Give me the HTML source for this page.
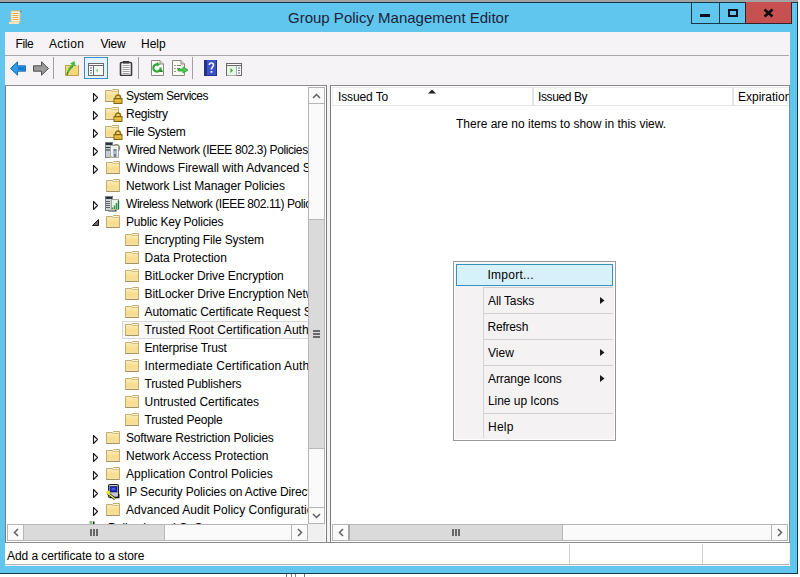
<!DOCTYPE html>
<html><head><meta charset="utf-8"><style>
html,body{margin:0;padding:0;width:800px;height:577px;overflow:hidden;background:#fff;font-family:"Liberation Sans", sans-serif;font-size:12px;color:#000}
div{box-sizing:border-box}
.a{position:absolute;white-space:nowrap}
.t{position:absolute;white-space:nowrap;line-height:18px;height:18px}
</style></head><body>
<div class="a" style="left:0;top:0;width:800px;height:2px;background:#a4a2a3"></div>
<div class="a" style="left:0;top:2px;width:798px;height:572px;background:#60c6ee;border-top:1px solid #163846;border-right:1px solid #163846;border-bottom:1px solid #163846"></div>
<!-- white strip right -->
<!-- app icon -->
<svg class="a" style="left:8px;top:9px" width="16" height="16" viewBox="0 0 16 16"><path d="M3,2 H12 V13 H3Z" fill="#fbf3dc" stroke="#d8c089"/><path d="M4.5,4.5 H10.5 M4.5,6.5 H10.5 M4.5,8.5 H10.5 M4.5,10.5 H10.5" stroke="#e0a850" stroke-width="1"/><path d="M1,14 H11" stroke="#f6e6b8" stroke-width="2"/><circle cx="13" cy="2.5" r="1" fill="#7090a0"/></svg>
<div class="a" style="left:0;top:8px;width:797px;text-align:center;font-size:15px;line-height:20px;color:#1e2238;padding-left:0">Group Policy Management Editor</div>
<!-- caption buttons -->
<div class="a" style="left:691px;top:2px;width:101px;height:22px;border:1px solid #163846;border-top:none"></div>
<div class="a" style="left:719px;top:2px;width:1px;height:22px;background:#163846"></div>
<div class="a" style="left:745px;top:2px;width:47px;height:22px;background:#c75050;border:1px solid #3a1f25;border-top:none"></div>
<div class="a" style="left:700px;top:14px;width:10px;height:3px;background:#0d0f1e"></div>
<div class="a" style="left:728px;top:9px;width:10px;height:8px;border:2px solid #0d0f1e"></div>
<svg class="a" style="left:763px;top:8px" width="11" height="10" viewBox="0 0 11 10"><path d="M1.5,1.5 L9.5,8.5 M9.5,1.5 L1.5,8.5" stroke="#0d0d0d" stroke-width="2.6"/></svg>

<!-- client area -->
<div class="a" style="left:5px;top:32px;width:785px;height:534px;background:#f6f3f6"></div>
<!-- menu -->
<div class="a" style="left:15.5px;top:35px;line-height:18px;letter-spacing:-0.4px">File</div>
<div class="a" style="left:49px;top:35px;line-height:18px;letter-spacing:0.3px">Action</div>
<div class="a" style="left:100.5px;top:35px;line-height:18px;letter-spacing:-0.25px">View</div>
<div class="a" style="left:141px;top:35px;line-height:18px">Help</div>
<div class="a" style="left:5px;top:55px;width:784px;height:1px;background:#a8a8a8"></div>
<!-- toolbar -->
<svg class="a" style="left:9px;top:60px" width="18" height="17" viewBox="0 0 18 17"><path d="M1.5,8.5 L8.5,1.8 V5.8 H16.5 V11.2 H8.5 V15.2 Z" fill="#2d9be6" stroke="#1d6fb8" stroke-width="1" stroke-linejoin="round"/><path d="M9,7 H15.5 V10 H9Z" fill="#0d62c0" opacity="0.6"/></svg>
<svg class="a" style="left:32px;top:60px" width="18" height="17" viewBox="0 0 18 17"><path d="M16.5,8.5 L9.5,1.8 V5.8 H1.5 V11.2 H9.5 V15.2 Z" fill="#9a9a9a" stroke="#505050" stroke-width="1" stroke-linejoin="round"/></svg>
<div class="a" style="left:53px;top:57px;width:1px;height:22px;background:#a0a0a0"></div>
<svg class="a" style="left:64px;top:60px" width="16" height="17" viewBox="0 0 16 17"><path d="M1.5,5.5 H14.5 V15.5 H1.5Z" fill="#f6d77c" stroke="#c0a050"/><path d="M3,15 C4,10 6,8 9,6" stroke="#3a8a2a" stroke-width="1.6" fill="none"/><path d="M6,3.5 L10.5,1 L11.5,6.5 Z" fill="#3cc43c"/><path d="M4,12 C5,8 7,6 9.5,4.5" stroke="#40c040" stroke-width="1.8" fill="none"/><circle cx="13" cy="5" r="1" fill="#fff"/></svg>
<div class="a" style="left:84px;top:57px;width:24px;height:22px;background:#e3f2fb;border:1px solid #3a8fc4"></div>
<svg class="a" style="left:88px;top:63px" width="16" height="13" viewBox="0 0 16 13"><rect x="0.5" y="0.5" width="15" height="12" fill="#fafafa" stroke="#6a6a6a"/><path d="M0.5,2.5 H15.5" stroke="#6a6a6a"/><path d="M5.5,3 V12.5" stroke="#6a6a6a"/><path d="M2,5 H4 M2,7.5 H4 M2,10 H4" stroke="#5070a0" stroke-width="1"/><path d="M10,5.5 L7.5,7.5 L10,9.5Z" fill="#3aa040"/><rect x="6" y="3" width="9" height="9" fill="#eef8e8" opacity="0.5"/></svg>
<svg class="a" style="left:119px;top:60px" width="14" height="16" viewBox="0 0 14 16"><rect x="1.5" y="2.5" width="11" height="13" rx="1" fill="#f8f8f8" stroke="#3a3a3a" stroke-width="1.6"/><path d="M3.5,5.5 H10.5 M3.5,7.5 H10.5 M3.5,9.5 H10.5 M3.5,11.5 H10.5 M3.5,13.5 H10.5" stroke="#8a8a8a" stroke-width="0.8"/><rect x="4" y="1" width="6" height="2.5" fill="#3a3a3a"/></svg>
<div class="a" style="left:138px;top:57px;width:1px;height:22px;background:#a0a0a0"></div>
<svg class="a" style="left:150px;top:59px" width="15" height="17" viewBox="0 0 15 17"><path d="M1.5,1.5 H10 L13.5,5 V16.5 H1.5Z" fill="#fbfbf6" stroke="#8a8a80"/><path d="M10,1.5 V5 H13.5" fill="#e0e0e0" stroke="#8a8a80"/><path d="M10.5,8.5 A3.6,3.6 0 1 1 7.5,5.4" fill="none" stroke="#2fa83a" stroke-width="2.2"/><path d="M7,3 L10.2,5.6 L6.8,7.6Z" fill="#2fa83a"/><path d="M11.5,10 L9,13 L13,13Z" fill="#1f8a2a"/></svg>
<svg class="a" style="left:171px;top:59px" width="18" height="17" viewBox="0 0 18 17"><path d="M1.5,1.5 H10 L13.5,5 V16.5 H1.5Z" fill="#fbfbf6" stroke="#8a8a80"/><path d="M10,1.5 V5 H13.5" fill="#e0e0e0" stroke="#8a8a80"/><path d="M3.5,6.5 H4.5 M3.5,9.5 H4.5 M3.5,12.5 H4.5" stroke="#303030" stroke-width="1.2"/><path d="M6,6.5 H10 M6,9.5 H9" stroke="#808080" stroke-width="1"/><path d="M7,10 H12 V8 L17,11 L12,14 V12 H7Z" fill="#4ad04a" stroke="#2a9a2a" stroke-width="0.8"/></svg>
<div class="a" style="left:192px;top:57px;width:1px;height:22px;background:#a0a0a0"></div>
<svg class="a" style="left:204px;top:60px" width="13" height="16" viewBox="0 0 13 16"><rect x="0" y="0" width="13" height="16" fill="#3c52c4"/><rect x="0" y="0" width="3" height="16" fill="#23338a"/><rect x="12" y="0" width="1" height="16" fill="#24308a"/><rect x="0" y="15" width="13" height="1" fill="#24308a"/><path d="M5.3,5 C5.3,2.4 9.5,2.4 9.5,5 C9.5,7 7.4,7 7.4,9.5" fill="none" stroke="#f0f4ff" stroke-width="1.6"/><rect x="6.6" y="11" width="1.8" height="1.8" fill="#f0f4ff"/></svg>
<svg class="a" style="left:226px;top:63px" width="16" height="13" viewBox="0 0 16 13"><rect x="0.5" y="0.5" width="15" height="12" fill="#fafafa" stroke="#6a6a6a"/><path d="M0.5,2.5 H15.5" stroke="#6a6a6a"/><path d="M10.5,3 V12.5" stroke="#6a6a6a"/><rect x="1" y="3" width="9.5" height="9.5" fill="#eaf6e4"/><path d="M12,5 H14 M12,7.5 H14 M12,10 H14" stroke="#5070a0" stroke-width="1"/><path d="M4.5,5 L7,7.5 L4.5,10Z" fill="#3aa040"/></svg>

<div class="a" style="left:5px;top:85px;width:322px;height:1px;background:#8a8a8a"></div>
<div class="a" style="left:330px;top:85px;width:460px;height:1px;background:#8a8a8a"></div>

<!-- tree pane -->
<div class="a" style="left:5px;top:86px;width:322px;height:457px;background:#fff;border-left:1px solid #7a7a7a;border-right:1px solid #7a7a7a"></div>
<div class="a" style="left:6px;top:87px;width:302px;height:437px;overflow:hidden">
<div class="a" style="left:-6px;top:-87px;width:800px;height:600px">
<svg width="8" height="12" viewBox="0 0 8 12" style="position:absolute;left:92px;top:92px"><path d="M1.5,1.5 V9.5 L5.5,5.5 Z" fill="none" stroke="#1a1a1a" stroke-width="1.1" stroke-linejoin="round"/></svg>
<svg width="16" height="16" viewBox="0 0 16 16" style="position:absolute;left:104px;top:87px"><defs><linearGradient id="fg" x1="0" y1="0" x2="0" y2="1"><stop offset="0" stop-color="#fcf0c4"/><stop offset="0.6" stop-color="#f8dc8c"/><stop offset="1" stop-color="#f4e2a8"/></linearGradient></defs><path d="M1.5,3.5 H7.5 L8.5,2.5 H14.5 V14.5 H1.5 Z" fill="url(#fg)" stroke="#c2ad72"/><path d="M8.5,3 H14 V4.5 H8.5Z" fill="#fff6d8"/><path d="M7.5,4.5 H14" stroke="#d8c080" stroke-width="1"/><path d="M1.5,14.5 H14.5" stroke="#a89060"/></svg><svg width="10" height="10" viewBox="0 0 10 10" style="position:absolute;left:113px;top:94px"><path d="M2.5,5 V3.5 A2.5,2.5 0 0 1 7.5,3.5 V5" fill="#f0d070" stroke="#8a7010" stroke-width="1.4"/><rect x="1" y="4.5" width="8" height="5" fill="#d4a82a" stroke="#806510" stroke-width="1"/><path d="M1.5,6.5 H8.5 M1.5,8 H8.5" stroke="#f0c850" stroke-width="0.8"/></svg>
<div class="t" style="left:126px;top:87px;letter-spacing:-0.486px">System Services</div>
<svg width="8" height="12" viewBox="0 0 8 12" style="position:absolute;left:92px;top:110px"><path d="M1.5,1.5 V9.5 L5.5,5.5 Z" fill="none" stroke="#1a1a1a" stroke-width="1.1" stroke-linejoin="round"/></svg>
<svg width="16" height="16" viewBox="0 0 16 16" style="position:absolute;left:104px;top:105px"><defs><linearGradient id="fg" x1="0" y1="0" x2="0" y2="1"><stop offset="0" stop-color="#fcf0c4"/><stop offset="0.6" stop-color="#f8dc8c"/><stop offset="1" stop-color="#f4e2a8"/></linearGradient></defs><path d="M1.5,3.5 H7.5 L8.5,2.5 H14.5 V14.5 H1.5 Z" fill="url(#fg)" stroke="#c2ad72"/><path d="M8.5,3 H14 V4.5 H8.5Z" fill="#fff6d8"/><path d="M7.5,4.5 H14" stroke="#d8c080" stroke-width="1"/><path d="M1.5,14.5 H14.5" stroke="#a89060"/></svg><svg width="10" height="10" viewBox="0 0 10 10" style="position:absolute;left:113px;top:112px"><path d="M2.5,5 V3.5 A2.5,2.5 0 0 1 7.5,3.5 V5" fill="#f0d070" stroke="#8a7010" stroke-width="1.4"/><rect x="1" y="4.5" width="8" height="5" fill="#d4a82a" stroke="#806510" stroke-width="1"/><path d="M1.5,6.5 H8.5 M1.5,8 H8.5" stroke="#f0c850" stroke-width="0.8"/></svg>
<div class="t" style="left:126px;top:105px;letter-spacing:-0.286px">Registry</div>
<svg width="8" height="12" viewBox="0 0 8 12" style="position:absolute;left:92px;top:128px"><path d="M1.5,1.5 V9.5 L5.5,5.5 Z" fill="none" stroke="#1a1a1a" stroke-width="1.1" stroke-linejoin="round"/></svg>
<svg width="16" height="16" viewBox="0 0 16 16" style="position:absolute;left:104px;top:123px"><defs><linearGradient id="fg" x1="0" y1="0" x2="0" y2="1"><stop offset="0" stop-color="#fcf0c4"/><stop offset="0.6" stop-color="#f8dc8c"/><stop offset="1" stop-color="#f4e2a8"/></linearGradient></defs><path d="M1.5,3.5 H7.5 L8.5,2.5 H14.5 V14.5 H1.5 Z" fill="url(#fg)" stroke="#c2ad72"/><path d="M8.5,3 H14 V4.5 H8.5Z" fill="#fff6d8"/><path d="M7.5,4.5 H14" stroke="#d8c080" stroke-width="1"/><path d="M1.5,14.5 H14.5" stroke="#a89060"/></svg><svg width="10" height="10" viewBox="0 0 10 10" style="position:absolute;left:113px;top:130px"><path d="M2.5,5 V3.5 A2.5,2.5 0 0 1 7.5,3.5 V5" fill="#f0d070" stroke="#8a7010" stroke-width="1.4"/><rect x="1" y="4.5" width="8" height="5" fill="#d4a82a" stroke="#806510" stroke-width="1"/><path d="M1.5,6.5 H8.5 M1.5,8 H8.5" stroke="#f0c850" stroke-width="0.8"/></svg>
<div class="t" style="left:126px;top:123px;letter-spacing:-0.3px">File System</div>
<svg width="8" height="12" viewBox="0 0 8 12" style="position:absolute;left:92px;top:146px"><path d="M1.5,1.5 V9.5 L5.5,5.5 Z" fill="none" stroke="#1a1a1a" stroke-width="1.1" stroke-linejoin="round"/></svg>
<svg width="17" height="17" viewBox="0 0 17 17" style="position:absolute;left:104px;top:141px"><rect x="1.5" y="1.5" width="7" height="15" fill="#c4ccd6" stroke="#6f7d8c"/><rect x="2" y="2" width="6" height="2" fill="#2a3038"/><path d="M2,6.5 H6 M2,9 H6" stroke="#2a3038" stroke-width="1.2"/><rect x="6.5" y="4.5" width="8" height="12" fill="#f4f2ec" stroke="#b0ac9c"/><rect x="9.5" y="8" width="3" height="8" fill="#6f82a0"/><path d="M11,10 V13" stroke="#e8eef8" stroke-width="1"/><path d="M9,4.5 C12,3 15,3 15.5,6 C16,8 15,9 14.5,10" fill="none" stroke="#8f8872" stroke-width="1.1"/><rect x="5" y="15" width="3" height="1.5" fill="#d0b890"/></svg>
<div class="t" style="left:126px;top:141px;letter-spacing:-0.39px">Wired Network (IEEE 802.3) Policies</div>
<svg width="8" height="12" viewBox="0 0 8 12" style="position:absolute;left:92px;top:164px"><path d="M1.5,1.5 V9.5 L5.5,5.5 Z" fill="none" stroke="#1a1a1a" stroke-width="1.1" stroke-linejoin="round"/></svg>
<svg width="16" height="16" viewBox="0 0 16 16" style="position:absolute;left:105px;top:159px"><defs><linearGradient id="fg" x1="0" y1="0" x2="0" y2="1"><stop offset="0" stop-color="#fcf0c4"/><stop offset="0.6" stop-color="#f8dc8c"/><stop offset="1" stop-color="#f4e2a8"/></linearGradient></defs><path d="M1.5,3.5 H7.5 L8.5,2.5 H14.5 V14.5 H1.5 Z" fill="url(#fg)" stroke="#c2ad72"/><path d="M8.5,3 H14 V4.5 H8.5Z" fill="#fff6d8"/><path d="M7.5,4.5 H14" stroke="#d8c080" stroke-width="1"/><path d="M1.5,14.5 H14.5" stroke="#a89060"/></svg>
<div class="t" style="left:126px;top:159px;letter-spacing:-0.021px">Windows Firewall with Advanced Security</div>
<svg width="16" height="16" viewBox="0 0 16 16" style="position:absolute;left:105px;top:177px"><defs><linearGradient id="fg" x1="0" y1="0" x2="0" y2="1"><stop offset="0" stop-color="#fcf0c4"/><stop offset="0.6" stop-color="#f8dc8c"/><stop offset="1" stop-color="#f4e2a8"/></linearGradient></defs><path d="M1.5,3.5 H7.5 L8.5,2.5 H14.5 V14.5 H1.5 Z" fill="url(#fg)" stroke="#c2ad72"/><path d="M8.5,3 H14 V4.5 H8.5Z" fill="#fff6d8"/><path d="M7.5,4.5 H14" stroke="#d8c080" stroke-width="1"/><path d="M1.5,14.5 H14.5" stroke="#a89060"/></svg>
<div class="t" style="left:126px;top:177px;letter-spacing:-0.089px">Network List Manager Policies</div>
<svg width="8" height="12" viewBox="0 0 8 12" style="position:absolute;left:92px;top:200px"><path d="M1.5,1.5 V9.5 L5.5,5.5 Z" fill="none" stroke="#1a1a1a" stroke-width="1.1" stroke-linejoin="round"/></svg>
<svg width="17" height="17" viewBox="0 0 17 17" style="position:absolute;left:104px;top:195px"><rect x="1.5" y="1.5" width="7" height="14" fill="#d0d4d8" stroke="#7a8088"/><rect x="2" y="2" width="6" height="2" fill="#2a3038"/><path d="M2,6.5 H6 M2,8.5 H6 M2,10.5 H6 M2,12.5 H6" stroke="#50565c" stroke-width="0.9"/><rect x="7.5" y="4.5" width="7" height="10" fill="#e8f4e8" stroke="#a0a890"/><path d="M8.5,14 V12.5 M10.5,14 V10.5 M12.5,14 V8 M14.5,14 V5.5" stroke="#1f7a3a" stroke-width="1.4"/><path d="M9,14 V12.5 M11,14 V10.5 M13,14 V8" stroke="#7ad890" stroke-width="0.6"/><rect x="4.5" y="15" width="8" height="1.5" fill="#3a3a3a"/><rect x="5" y="14.5" width="6" height="1" fill="#dfe8c0"/></svg>
<div class="t" style="left:126px;top:195px;letter-spacing:-0.434px">Wireless Network (IEEE 802.11) Policies</div>
<svg width="8" height="8" viewBox="0 0 8 8" style="position:absolute;left:92px;top:219px"><path d="M6.5,0.5 V6.5 H0.5 Z" fill="#6a6a6a" stroke="#1a1a1a" stroke-width="1" stroke-linejoin="round"/></svg>
<svg width="16" height="16" viewBox="0 0 16 16" style="position:absolute;left:105px;top:213px"><defs><linearGradient id="fg" x1="0" y1="0" x2="0" y2="1"><stop offset="0" stop-color="#fcf0c4"/><stop offset="0.6" stop-color="#f8dc8c"/><stop offset="1" stop-color="#f4e2a8"/></linearGradient></defs><path d="M1.5,3.5 H7.5 L8.5,2.5 H14.5 V14.5 H1.5 Z" fill="url(#fg)" stroke="#c2ad72"/><path d="M8.5,3 H14 V4.5 H8.5Z" fill="#fff6d8"/><path d="M7.5,4.5 H14" stroke="#d8c080" stroke-width="1"/><path d="M1.5,14.5 H14.5" stroke="#a89060"/></svg>
<div class="t" style="left:126px;top:213px;letter-spacing:-0.222px">Public Key Policies</div>
<svg width="16" height="16" viewBox="0 0 16 16" style="position:absolute;left:124px;top:231px"><defs><linearGradient id="fg" x1="0" y1="0" x2="0" y2="1"><stop offset="0" stop-color="#fcf0c4"/><stop offset="0.6" stop-color="#f8dc8c"/><stop offset="1" stop-color="#f4e2a8"/></linearGradient></defs><path d="M1.5,3.5 H7.5 L8.5,2.5 H14.5 V14.5 H1.5 Z" fill="url(#fg)" stroke="#c2ad72"/><path d="M8.5,3 H14 V4.5 H8.5Z" fill="#fff6d8"/><path d="M7.5,4.5 H14" stroke="#d8c080" stroke-width="1"/><path d="M1.5,14.5 H14.5" stroke="#a89060"/></svg>
<div class="t" style="left:144.5px;top:231px;letter-spacing:-0.152px">Encrypting File System</div>
<svg width="16" height="16" viewBox="0 0 16 16" style="position:absolute;left:124px;top:249px"><defs><linearGradient id="fg" x1="0" y1="0" x2="0" y2="1"><stop offset="0" stop-color="#fcf0c4"/><stop offset="0.6" stop-color="#f8dc8c"/><stop offset="1" stop-color="#f4e2a8"/></linearGradient></defs><path d="M1.5,3.5 H7.5 L8.5,2.5 H14.5 V14.5 H1.5 Z" fill="url(#fg)" stroke="#c2ad72"/><path d="M8.5,3 H14 V4.5 H8.5Z" fill="#fff6d8"/><path d="M7.5,4.5 H14" stroke="#d8c080" stroke-width="1"/><path d="M1.5,14.5 H14.5" stroke="#a89060"/></svg>
<div class="t" style="left:144.5px;top:249px;letter-spacing:-0.021px">Data Protection</div>
<svg width="16" height="16" viewBox="0 0 16 16" style="position:absolute;left:124px;top:267px"><defs><linearGradient id="fg" x1="0" y1="0" x2="0" y2="1"><stop offset="0" stop-color="#fcf0c4"/><stop offset="0.6" stop-color="#f8dc8c"/><stop offset="1" stop-color="#f4e2a8"/></linearGradient></defs><path d="M1.5,3.5 H7.5 L8.5,2.5 H14.5 V14.5 H1.5 Z" fill="url(#fg)" stroke="#c2ad72"/><path d="M8.5,3 H14 V4.5 H8.5Z" fill="#fff6d8"/><path d="M7.5,4.5 H14" stroke="#d8c080" stroke-width="1"/><path d="M1.5,14.5 H14.5" stroke="#a89060"/></svg>
<div class="t" style="left:144.5px;top:267px;letter-spacing:-0.084px">BitLocker Drive Encryption</div>
<svg width="16" height="16" viewBox="0 0 16 16" style="position:absolute;left:124px;top:285px"><defs><linearGradient id="fg" x1="0" y1="0" x2="0" y2="1"><stop offset="0" stop-color="#fcf0c4"/><stop offset="0.6" stop-color="#f8dc8c"/><stop offset="1" stop-color="#f4e2a8"/></linearGradient></defs><path d="M1.5,3.5 H7.5 L8.5,2.5 H14.5 V14.5 H1.5 Z" fill="url(#fg)" stroke="#c2ad72"/><path d="M8.5,3 H14 V4.5 H8.5Z" fill="#fff6d8"/><path d="M7.5,4.5 H14" stroke="#d8c080" stroke-width="1"/><path d="M1.5,14.5 H14.5" stroke="#a89060"/></svg>
<div class="t" style="left:144.5px;top:285px;letter-spacing:-0.072px">BitLocker Drive Encryption Network Unlock Certificate</div>
<svg width="16" height="16" viewBox="0 0 16 16" style="position:absolute;left:124px;top:303px"><defs><linearGradient id="fg" x1="0" y1="0" x2="0" y2="1"><stop offset="0" stop-color="#fcf0c4"/><stop offset="0.6" stop-color="#f8dc8c"/><stop offset="1" stop-color="#f4e2a8"/></linearGradient></defs><path d="M1.5,3.5 H7.5 L8.5,2.5 H14.5 V14.5 H1.5 Z" fill="url(#fg)" stroke="#c2ad72"/><path d="M8.5,3 H14 V4.5 H8.5Z" fill="#fff6d8"/><path d="M7.5,4.5 H14" stroke="#d8c080" stroke-width="1"/><path d="M1.5,14.5 H14.5" stroke="#a89060"/></svg>
<div class="t" style="left:144.5px;top:303px;letter-spacing:-0.093px">Automatic Certificate Request Settings</div>
<div style="position:absolute;left:122px;top:321px;width:200px;height:18px;border:1px solid #d9d9d9;background:#f7f7f7"></div>
<svg width="16" height="16" viewBox="0 0 16 16" style="position:absolute;left:124px;top:321px"><defs><linearGradient id="fg" x1="0" y1="0" x2="0" y2="1"><stop offset="0" stop-color="#fcf0c4"/><stop offset="0.6" stop-color="#f8dc8c"/><stop offset="1" stop-color="#f4e2a8"/></linearGradient></defs><path d="M1.5,3.5 H7.5 L8.5,2.5 H14.5 V14.5 H1.5 Z" fill="url(#fg)" stroke="#c2ad72"/><path d="M8.5,3 H14 V4.5 H8.5Z" fill="#fff6d8"/><path d="M7.5,4.5 H14" stroke="#d8c080" stroke-width="1"/><path d="M1.5,14.5 H14.5" stroke="#a89060"/></svg>
<div class="t" style="left:144.5px;top:321px;letter-spacing:0.04px">Trusted Root Certification Authorities</div>
<svg width="16" height="16" viewBox="0 0 16 16" style="position:absolute;left:124px;top:339px"><defs><linearGradient id="fg" x1="0" y1="0" x2="0" y2="1"><stop offset="0" stop-color="#fcf0c4"/><stop offset="0.6" stop-color="#f8dc8c"/><stop offset="1" stop-color="#f4e2a8"/></linearGradient></defs><path d="M1.5,3.5 H7.5 L8.5,2.5 H14.5 V14.5 H1.5 Z" fill="url(#fg)" stroke="#c2ad72"/><path d="M8.5,3 H14 V4.5 H8.5Z" fill="#fff6d8"/><path d="M7.5,4.5 H14" stroke="#d8c080" stroke-width="1"/><path d="M1.5,14.5 H14.5" stroke="#a89060"/></svg>
<div class="t" style="left:144.5px;top:339px;letter-spacing:-0.153px">Enterprise Trust</div>
<svg width="16" height="16" viewBox="0 0 16 16" style="position:absolute;left:124px;top:357px"><defs><linearGradient id="fg" x1="0" y1="0" x2="0" y2="1"><stop offset="0" stop-color="#fcf0c4"/><stop offset="0.6" stop-color="#f8dc8c"/><stop offset="1" stop-color="#f4e2a8"/></linearGradient></defs><path d="M1.5,3.5 H7.5 L8.5,2.5 H14.5 V14.5 H1.5 Z" fill="url(#fg)" stroke="#c2ad72"/><path d="M8.5,3 H14 V4.5 H8.5Z" fill="#fff6d8"/><path d="M7.5,4.5 H14" stroke="#d8c080" stroke-width="1"/><path d="M1.5,14.5 H14.5" stroke="#a89060"/></svg>
<div class="t" style="left:144.5px;top:357px;letter-spacing:0.13px">Intermediate Certification Authorities</div>
<svg width="16" height="16" viewBox="0 0 16 16" style="position:absolute;left:124px;top:375px"><defs><linearGradient id="fg" x1="0" y1="0" x2="0" y2="1"><stop offset="0" stop-color="#fcf0c4"/><stop offset="0.6" stop-color="#f8dc8c"/><stop offset="1" stop-color="#f4e2a8"/></linearGradient></defs><path d="M1.5,3.5 H7.5 L8.5,2.5 H14.5 V14.5 H1.5 Z" fill="url(#fg)" stroke="#c2ad72"/><path d="M8.5,3 H14 V4.5 H8.5Z" fill="#fff6d8"/><path d="M7.5,4.5 H14" stroke="#d8c080" stroke-width="1"/><path d="M1.5,14.5 H14.5" stroke="#a89060"/></svg>
<div class="t" style="left:144.5px;top:375px;letter-spacing:-0.153px">Trusted Publishers</div>
<svg width="16" height="16" viewBox="0 0 16 16" style="position:absolute;left:124px;top:393px"><defs><linearGradient id="fg" x1="0" y1="0" x2="0" y2="1"><stop offset="0" stop-color="#fcf0c4"/><stop offset="0.6" stop-color="#f8dc8c"/><stop offset="1" stop-color="#f4e2a8"/></linearGradient></defs><path d="M1.5,3.5 H7.5 L8.5,2.5 H14.5 V14.5 H1.5 Z" fill="url(#fg)" stroke="#c2ad72"/><path d="M8.5,3 H14 V4.5 H8.5Z" fill="#fff6d8"/><path d="M7.5,4.5 H14" stroke="#d8c080" stroke-width="1"/><path d="M1.5,14.5 H14.5" stroke="#a89060"/></svg>
<div class="t" style="left:144.5px;top:393px;letter-spacing:-0.038px">Untrusted Certificates</div>
<svg width="16" height="16" viewBox="0 0 16 16" style="position:absolute;left:124px;top:411px"><defs><linearGradient id="fg" x1="0" y1="0" x2="0" y2="1"><stop offset="0" stop-color="#fcf0c4"/><stop offset="0.6" stop-color="#f8dc8c"/><stop offset="1" stop-color="#f4e2a8"/></linearGradient></defs><path d="M1.5,3.5 H7.5 L8.5,2.5 H14.5 V14.5 H1.5 Z" fill="url(#fg)" stroke="#c2ad72"/><path d="M8.5,3 H14 V4.5 H8.5Z" fill="#fff6d8"/><path d="M7.5,4.5 H14" stroke="#d8c080" stroke-width="1"/><path d="M1.5,14.5 H14.5" stroke="#a89060"/></svg>
<div class="t" style="left:144.5px;top:411px;letter-spacing:-0.208px">Trusted People</div>
<svg width="8" height="12" viewBox="0 0 8 12" style="position:absolute;left:92px;top:434px"><path d="M1.5,1.5 V9.5 L5.5,5.5 Z" fill="none" stroke="#1a1a1a" stroke-width="1.1" stroke-linejoin="round"/></svg>
<svg width="16" height="16" viewBox="0 0 16 16" style="position:absolute;left:105px;top:429px"><defs><linearGradient id="fg" x1="0" y1="0" x2="0" y2="1"><stop offset="0" stop-color="#fcf0c4"/><stop offset="0.6" stop-color="#f8dc8c"/><stop offset="1" stop-color="#f4e2a8"/></linearGradient></defs><path d="M1.5,3.5 H7.5 L8.5,2.5 H14.5 V14.5 H1.5 Z" fill="url(#fg)" stroke="#c2ad72"/><path d="M8.5,3 H14 V4.5 H8.5Z" fill="#fff6d8"/><path d="M7.5,4.5 H14" stroke="#d8c080" stroke-width="1"/><path d="M1.5,14.5 H14.5" stroke="#a89060"/></svg>
<div class="t" style="left:126px;top:429px;letter-spacing:-0.152px">Software Restriction Policies</div>
<svg width="8" height="12" viewBox="0 0 8 12" style="position:absolute;left:92px;top:452px"><path d="M1.5,1.5 V9.5 L5.5,5.5 Z" fill="none" stroke="#1a1a1a" stroke-width="1.1" stroke-linejoin="round"/></svg>
<svg width="16" height="16" viewBox="0 0 16 16" style="position:absolute;left:105px;top:447px"><defs><linearGradient id="fg" x1="0" y1="0" x2="0" y2="1"><stop offset="0" stop-color="#fcf0c4"/><stop offset="0.6" stop-color="#f8dc8c"/><stop offset="1" stop-color="#f4e2a8"/></linearGradient></defs><path d="M1.5,3.5 H7.5 L8.5,2.5 H14.5 V14.5 H1.5 Z" fill="url(#fg)" stroke="#c2ad72"/><path d="M8.5,3 H14 V4.5 H8.5Z" fill="#fff6d8"/><path d="M7.5,4.5 H14" stroke="#d8c080" stroke-width="1"/><path d="M1.5,14.5 H14.5" stroke="#a89060"/></svg>
<div class="t" style="left:126px;top:447px;letter-spacing:-0.01px">Network Access Protection</div>
<svg width="8" height="12" viewBox="0 0 8 12" style="position:absolute;left:92px;top:470px"><path d="M1.5,1.5 V9.5 L5.5,5.5 Z" fill="none" stroke="#1a1a1a" stroke-width="1.1" stroke-linejoin="round"/></svg>
<svg width="16" height="16" viewBox="0 0 16 16" style="position:absolute;left:105px;top:465px"><defs><linearGradient id="fg" x1="0" y1="0" x2="0" y2="1"><stop offset="0" stop-color="#fcf0c4"/><stop offset="0.6" stop-color="#f8dc8c"/><stop offset="1" stop-color="#f4e2a8"/></linearGradient></defs><path d="M1.5,3.5 H7.5 L8.5,2.5 H14.5 V14.5 H1.5 Z" fill="url(#fg)" stroke="#c2ad72"/><path d="M8.5,3 H14 V4.5 H8.5Z" fill="#fff6d8"/><path d="M7.5,4.5 H14" stroke="#d8c080" stroke-width="1"/><path d="M1.5,14.5 H14.5" stroke="#a89060"/></svg>
<div class="t" style="left:126px;top:465px;letter-spacing:0.046px">Application Control Policies</div>
<svg width="8" height="12" viewBox="0 0 8 12" style="position:absolute;left:92px;top:488px"><path d="M1.5,1.5 V9.5 L5.5,5.5 Z" fill="none" stroke="#1a1a1a" stroke-width="1.1" stroke-linejoin="round"/></svg>
<svg width="17" height="17" viewBox="0 0 17 17" style="position:absolute;left:105px;top:483px"><rect x="3.5" y="1.5" width="10" height="13" rx="1.5" fill="#c8c8d0" stroke="#202028" stroke-width="1.1"/><rect x="5" y="3.5" width="7" height="5.5" fill="#1c2cc0" stroke="#101040" stroke-width="0.6"/><path d="M6.5,6 H10" stroke="#6f8cff" stroke-width="1"/><path d="M13.8,11 V14.5 H5" fill="none" stroke="#101010" stroke-width="1.3"/><path d="M2.5,10 L10,16" stroke="#101010" stroke-width="2.6"/><path d="M2.5,10 L10,16" stroke="#f0f040" stroke-width="1.5"/><circle cx="3" cy="9.5" r="2" fill="#e8e83a"/></svg>
<div class="t" style="left:126px;top:483px;letter-spacing:-0.124px">IP Security Policies on Active Directory (contoso.com)</div>
<svg width="8" height="12" viewBox="0 0 8 12" style="position:absolute;left:92px;top:506px"><path d="M1.5,1.5 V9.5 L5.5,5.5 Z" fill="none" stroke="#1a1a1a" stroke-width="1.1" stroke-linejoin="round"/></svg>
<svg width="16" height="16" viewBox="0 0 16 16" style="position:absolute;left:105px;top:501px"><defs><linearGradient id="fg" x1="0" y1="0" x2="0" y2="1"><stop offset="0" stop-color="#fcf0c4"/><stop offset="0.6" stop-color="#f8dc8c"/><stop offset="1" stop-color="#f4e2a8"/></linearGradient></defs><path d="M1.5,3.5 H7.5 L8.5,2.5 H14.5 V14.5 H1.5 Z" fill="url(#fg)" stroke="#c2ad72"/><path d="M8.5,3 H14 V4.5 H8.5Z" fill="#fff6d8"/><path d="M7.5,4.5 H14" stroke="#d8c080" stroke-width="1"/><path d="M1.5,14.5 H14.5" stroke="#a89060"/></svg>
<div class="t" style="left:126px;top:501px;letter-spacing:0.02px">Advanced Audit Policy Configuration</div>
<svg width="16" height="16" viewBox="0 0 16 16" style="position:absolute;left:87px;top:519px"><rect x="2.5" y="2" width="3" height="4" fill="#8cc08a"/><rect x="6" y="2.5" width="1.5" height="3" fill="#1a1a1a"/></svg>
<div class="t" style="left:108px;top:519px;letter-spacing:-0.1px">Policy-based QoS</div>
</div>
</div>
<!-- tree vscroll -->
<div class="a" style="left:308px;top:87px;width:17px;height:437px;background:#fafafa;border:1px solid #b4b4b4"></div>
<div class="a" style="left:308px;top:103px;width:17px;height:1px;background:#b4b4b4"></div>
<div class="a" style="left:308px;top:507px;width:17px;height:1px;background:#b4b4b4"></div>
<div class="a" style="left:308px;top:219px;width:17px;height:230px;background:#dadada;border:1px solid #b8b8b8"></div>
<svg class="a" style="left:312px;top:93px" width="9" height="6" viewBox="0 0 9 6"><path d="M1,5 L4.5,1.5 L8,5" fill="none" stroke="#606060" stroke-width="1.5"/></svg>
<svg class="a" style="left:312px;top:513px" width="9" height="6" viewBox="0 0 9 6"><path d="M1,1 L4.5,4.5 L8,1" fill="none" stroke="#606060" stroke-width="1.5"/></svg>
<div class="a" style="left:313px;top:330px;width:7px;height:2px;background:#686868"></div>
<div class="a" style="left:313px;top:333px;width:7px;height:2px;background:#686868"></div>
<div class="a" style="left:313px;top:336px;width:7px;height:2px;background:#686868"></div>
<!-- tree hscroll -->
<div class="a" style="left:7px;top:524px;width:301px;height:17px;background:#fafafa;border:1px solid #b4b4b4"></div>
<div class="a" style="left:23px;top:524px;width:142px;height:17px;background:#dadada;border:1px solid #b8b8b8"></div>
<div class="a" style="left:291px;top:524px;width:1px;height:17px;background:#b4b4b4"></div>
<div class="a" style="left:308px;top:524px;width:17px;height:17px;background:#f0f0f0"></div>
<svg class="a" style="left:13px;top:528px" width="6" height="9" viewBox="0 0 6 9"><path d="M5,1 L1.5,4.5 L5,8" fill="none" stroke="#606060" stroke-width="1.5"/></svg>
<svg class="a" style="left:297px;top:528px" width="6" height="9" viewBox="0 0 6 9"><path d="M1,1 L4.5,4.5 L1,8" fill="none" stroke="#606060" stroke-width="1.5"/></svg>
<div class="a" style="left:90px;top:529px;width:2px;height:7px;background:#686868"></div>
<div class="a" style="left:93px;top:529px;width:2px;height:7px;background:#686868"></div>
<div class="a" style="left:96px;top:529px;width:2px;height:7px;background:#686868"></div>

<!-- result pane -->
<div class="a" style="left:330px;top:86px;width:460px;height:457px;background:#fff;border-left:1px solid #7a7a7a;border-right:1px solid #7a8a94;overflow:hidden">
 <div class="a" style="left:1px;top:1px;width:470px;height:19px;background:#fff;border-bottom:1px solid #e5e5e5;border-top:1px solid #ececec;border-left:1px solid #ececec"></div>
 <div class="a" style="left:201px;top:1px;width:2px;height:18px;background:#e5e5e5"></div>
 <div class="a" style="left:401px;top:1px;width:2px;height:18px;background:#e5e5e5"></div>
 <div class="a" style="left:7px;top:2px;line-height:18px;letter-spacing:-0.12px">Issued To</div>
 <div class="a" style="left:207px;top:2px;line-height:18px;letter-spacing:-0.4px">Issued By</div>
 <div class="a" style="left:407px;top:2px;line-height:18px;letter-spacing:0px">Expiration Date</div>
 <svg class="a" style="left:97px;top:3px" width="8" height="5" viewBox="0 0 8 5"><path d="M0,4.5 L4,0.5 L8,4.5Z" fill="#202020"/></svg>
 <div class="a" style="left:125px;top:29px;line-height:18px">There are no items to show in this view.</div>
</div>
<!-- result hscroll -->
<div class="a" style="left:332px;top:524px;width:456px;height:17px;background:#fafafa;border:1px solid #b4b4b4"></div>
<div class="a" style="left:348px;top:524px;width:215px;height:17px;background:#dadada;border:1px solid #b8b8b8;border-left:2px solid #a8a8a8"></div>
<div class="a" style="left:771px;top:524px;width:1px;height:17px;background:#b4b4b4"></div>
<svg class="a" style="left:338px;top:528px" width="6" height="9" viewBox="0 0 6 9"><path d="M5,1 L1.5,4.5 L5,8" fill="none" stroke="#606060" stroke-width="1.5"/></svg>
<svg class="a" style="left:777px;top:528px" width="6" height="9" viewBox="0 0 6 9"><path d="M1,1 L4.5,4.5 L1,8" fill="none" stroke="#606060" stroke-width="1.5"/></svg>
<div class="a" style="left:452px;top:529px;width:2px;height:7px;background:#686868"></div>
<div class="a" style="left:455px;top:529px;width:2px;height:7px;background:#686868"></div>
<div class="a" style="left:458px;top:529px;width:2px;height:7px;background:#686868"></div>

<!-- status bar -->
<div class="a" style="left:5px;top:542px;width:784px;height:1px;background:#8a8a8a"></div>
<div class="a" style="left:5px;top:543px;width:784px;height:22px;background:#fff;border-bottom:1px solid #b4b4b4"></div>
<div class="a" style="left:569px;top:544px;width:1px;height:20px;background:#d0d0d0"></div>
<div class="a" style="left:702px;top:544px;width:1px;height:20px;background:#d0d0d0"></div>
<div class="a" style="left:7px;top:547px;line-height:18px;letter-spacing:-0.074px">Add a certificate to a store</div>

<!-- context menu -->
<div class="a" style="left:453px;top:261px;width:163px;height:180px;background:#f5f2f4;border:1px solid #979797;box-shadow:inset -1px -1px 0 #fff, inset 1px 1px 0 #fff"></div>
<div class="a" style="left:483px;top:287px;width:1px;height:151px;background:#d4d4d4"></div>
<div class="a" style="left:456px;top:264px;width:157px;height:22px;background:#d7f1fb;border:1px solid #3592bf"></div>
<div class="a" style="left:483px;top:287px;width:130px;height:1px;background:#d0d0d0"></div>
<div class="a" style="left:483px;top:313px;width:130px;height:1px;background:#d0d0d0"></div>
<div class="a" style="left:483px;top:339px;width:130px;height:1px;background:#d0d0d0"></div>
<div class="a" style="left:483px;top:365px;width:130px;height:1px;background:#d0d0d0"></div>
<div class="a" style="left:483px;top:413px;width:130px;height:1px;background:#d0d0d0"></div>
<div class="a" style="left:487.5px;top:266px;line-height:18px;letter-spacing:0.25px">Import...</div>
<div class="a" style="left:488px;top:292px;line-height:18px;letter-spacing:-0.12px">All Tasks</div>
<div class="a" style="left:487.5px;top:318px;line-height:18px;letter-spacing:-0.2px">Refresh</div>
<div class="a" style="left:488px;top:344px;line-height:18px">View</div>
<div class="a" style="left:488px;top:370px;line-height:18px;letter-spacing:-0.08px">Arrange Icons</div>
<div class="a" style="left:488px;top:392px;line-height:18px;letter-spacing:-0.05px">Line up Icons</div>
<div class="a" style="left:488px;top:418px;line-height:18px;letter-spacing:0.25px">Help</div>
<svg class="a" style="left:600px;top:297px" width="5" height="8" viewBox="0 0 5 8"><path d="M0,0 L4.5,3.5 L0,7Z" fill="#1a1a1a"/></svg>
<svg class="a" style="left:600px;top:349px" width="5" height="8" viewBox="0 0 5 8"><path d="M0,0 L4.5,3.5 L0,7Z" fill="#1a1a1a"/></svg>
<svg class="a" style="left:600px;top:375px" width="5" height="8" viewBox="0 0 5 8"><path d="M0,0 L4.5,3.5 L0,7Z" fill="#1a1a1a"/></svg>

<!-- right/bottom outside -->
<div class="a" style="left:798px;top:0;width:2px;height:577px;background:#fff"></div>
<div class="a" style="left:0;top:574px;width:800px;height:3px;background:#fff"></div>
<div class="a" style="left:286px;top:574px;width:1px;height:3px;background:#707070"></div>
<div class="a" style="left:291px;top:574px;width:1px;height:3px;background:#808080"></div>
<div class="a" style="left:295px;top:574px;width:1px;height:3px;background:#808080"></div>
<div class="a" style="left:304px;top:574px;width:1px;height:3px;background:#707070"></div>
</body></html>
